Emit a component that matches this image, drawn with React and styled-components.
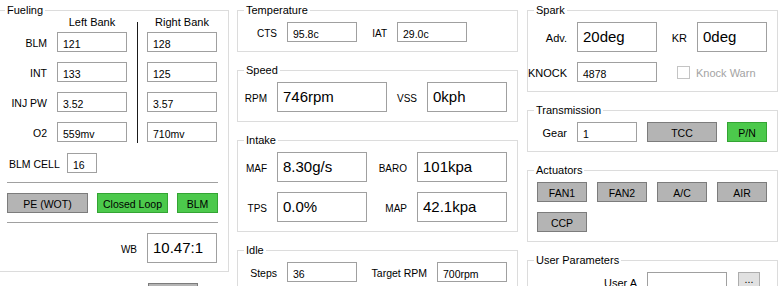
import React from "react";
import styled, { createGlobalStyle } from "styled-components";

const GlobalStyle = createGlobalStyle`
  * { box-sizing: border-box; }
  html, body {
    margin: 0;
    padding: 0;
    background: #ffffff;
    overflow: hidden;
  }
  body {
    font-family: "Liberation Sans", Arial, sans-serif;
    font-size: 11px;
    color: #000;
  }
`;

const Page = styled.div`
  display: flex;
  align-items: flex-start;
  width: 784px;
  height: 286px;
  padding-top: 3px;
  overflow: hidden;
`;

const Column = styled.div`
  display: flex;
  flex-direction: column;
  gap: 11px;
  flex-shrink: 0;
  width: ${(p) => p.$w}px;
  margin-left: ${(p) => p.$ml || 0}px;
`;

const Group = styled.fieldset`
  margin: 0;
  min-width: 0;
  border: 1px solid #dcdcdc;
  padding: ${(p) => p.$pt ?? 5}px 0 ${(p) => p.$pb ?? 9}px 0;
`;

const Legend = styled.legend`
  margin-left: 6px;
  padding: 0 2px;
  height: 14px;
  font-size: 11px;
  line-height: 14px;
`;

const Row = styled.div`
  display: flex;
  align-items: center;
  flex-wrap: ${(p) => (p.$wrap ? "wrap" : "nowrap")};
  gap: ${(p) => p.$gap || 0}px;
  margin-top: ${(p) => p.$mt || 0}px;
  padding-left: ${(p) => p.$pl || 0}px;
  padding-right: ${(p) => p.$pr || 0}px;
  justify-content: ${(p) => (p.$end ? "flex-end" : "flex-start")};
`;

const Stack = styled.div`
  display: flex;
  flex-direction: column;
  gap: 10px;
`;

const Label = styled.span`
  display: block;
  flex-shrink: 0;
  width: ${(p) => (p.$w ? `${p.$w}px` : "auto")};
  margin: 3px ${(p) => p.$mr ?? 10}px 0 0;
  font-size: ${(p) => p.$size || 10.5}px;
  line-height: 13px;
  text-align: ${(p) => (p.$left ? "left" : "right")};
  white-space: nowrap;
`;

const Field = styled.div`
  flex-shrink: 0;
  width: ${(p) => p.$w}px;
  height: ${(p) => (p.$big ? 30 : 20)}px;
  border: 1px solid #a0a0a0;
  background: #fff;
  padding: 5px 0 0 5px;
  font-size: ${(p) => (p.$big ? 15 : 10.5)}px;
  line-height: ${(p) => (p.$big ? 17 : 13)}px;
  color: #000;
  white-space: nowrap;
  overflow: hidden;
`;

const Btn = styled.div`
  flex-shrink: 0;
  display: flex;
  align-items: center;
  justify-content: center;
  width: ${(p) => p.$w}px;
  height: 20px;
  margin-left: ${(p) => p.$ml || 0}px;
  padding-top: 2px;
  font-size: 10.5px;
  border: 1px solid ${(p) => (p.$on ? "#33a433" : p.$light ? "#adadad" : "#7c7c7c")};
  background: ${(p) => (p.$on ? "#4cc94c" : p.$light ? "#e1e1e1" : "#b4b4b4")};
  color: #000;
`;

const DotsBtn = styled(Btn)`
  align-items: flex-start;
  padding-top: 1px;
  line-height: 10px;
`;

/* fueling parts */
const BankArea = styled.div`
  display: flex;
  align-items: flex-start;
`;

const LabelCol = styled.div`
  display: flex;
  flex-direction: column;
  width: 48px;
  margin-right: 10px;
`;

const BankCol = styled.div`
  display: flex;
  flex-direction: column;
  width: 70px;
`;

const BankHead = styled.div`
  height: 15px;
  font-size: 11px;
  line-height: 11px;
  text-align: center;
  white-space: nowrap;
`;

const RowLabel = styled.div`
  height: 20px;
  padding-top: 5px;
  font-size: 10.5px;
  line-height: 13px;
  text-align: right;
  white-space: nowrap;
`;

const VLine = styled.div`
  width: 1px;
  height: 121px;
  margin: 5px 9px 0 10px;
  background: #1a1a1a;
`;

const HLine = styled.div`
  height: 1px;
  margin: 9px 10px 0 8px;
  background: #a0a0a0;
`;

const CheckBox = styled.span`
  display: block;
  width: 13px;
  height: 13px;
  margin: 0 6px 0 20px;
  border: 1px solid #c4c4c4;
  background: #fff;
`;

const Disabled = styled.span`
  margin-top: 2px;
  font-size: 11px;
  color: #a3a3a3;
`;

const fuelRows = [
  { label: "BLM", left: "121", right: "128" },
  { label: "INT", left: "133", right: "125" },
  { label: "INJ PW", left: "3.52", right: "3.57" },
  { label: "O2", left: "559mv", right: "710mv" },
];

const actuators = ["FAN1", "FAN2", "A/C", "AIR", "CCP"];

function Fueling() {
  return (
    <Group $pt={0} $pb={8}>
      <Legend>Fueling</Legend>
      <BankArea>
        <LabelCol>
          <BankHead />
          <Stack>
            {fuelRows.map((r) => (
              <RowLabel key={r.label}>{r.label}</RowLabel>
            ))}
          </Stack>
        </LabelCol>
        <BankCol>
          <BankHead>Left Bank</BankHead>
          <Stack>
            {fuelRows.map((r) => (
              <Field key={r.label} $w={70}>{r.left}</Field>
            ))}
          </Stack>
        </BankCol>
        <VLine />
        <BankCol>
          <BankHead>Right Bank</BankHead>
          <Stack>
            {fuelRows.map((r) => (
              <Field key={r.label} $w={70}>{r.right}</Field>
            ))}
          </Stack>
        </BankCol>
      </BankArea>
      <Row $mt={10} $pl={10}>
        <Label $w={58} $mr={0} $left>BLM CELL</Label>
        <Field $w={30}>16</Field>
      </Row>
      <HLine />
      <Row $mt={10} $pl={8} $gap={9}>
        <Btn $w={81}>PE (WOT)</Btn>
        <Btn $w={71} $on>Closed Loop</Btn>
        <Btn $w={41} $on>BLM</Btn>
      </Row>
      <HLine />
      <Row $mt={10} $pr={11} $end>
        <Label $size={10}>WB</Label>
        <Field $w={70} $big>10.47:1</Field>
      </Row>
    </Group>
  );
}

export default function App() {
  return (
    <>
      <GlobalStyle />
      <Page>
        <Column $w={231} $ml={-2}>
          <Fueling />
          <Row $pl={9}>
            <Label $w={141} $mr={0} $left $size={11}>ECM Trouble Codes</Label>
            <Btn $w={50} />
          </Row>
        </Column>

        <Column $w={281} $ml={8}>
          <Group>
            <Legend>Temperature</Legend>
            <Row>
              <Label $w={39} $size={10}>CTS</Label>
              <Field $w={70}>95.8c</Field>
              <Label $w={30} $size={10}>IAT</Label>
              <Field $w={70}>29.0c</Field>
            </Row>
          </Group>
          <Group>
            <Legend>Speed</Legend>
            <Row>
              <Label $w={29} $size={10}>RPM</Label>
              <Field $w={110} $big>746rpm</Field>
              <Label $w={30} $size={10}>VSS</Label>
              <Field $w={80} $big>0kph</Field>
            </Row>
          </Group>
          <Group>
            <Legend>Intake</Legend>
            <Stack>
              <Row>
                <Label $w={29} $size={10}>MAF</Label>
                <Field $w={90} $big>8.30g/s</Field>
                <Label $w={40} $size={10}>BARO</Label>
                <Field $w={90} $big>101kpa</Field>
              </Row>
              <Row>
                <Label $w={29} $size={10}>TPS</Label>
                <Field $w={90} $big>0.0%</Field>
                <Label $w={40} $size={10}>MAP</Label>
                <Field $w={90} $big>42.1kpa</Field>
              </Row>
            </Stack>
          </Group>
          <Group>
            <Legend>Idle</Legend>
            <Row>
              <Label $w={39}>Steps</Label>
              <Field $w={70}>36</Field>
              <Label $w={70}>Target RPM</Label>
              <Field $w={70}>700rpm</Field>
            </Row>
          </Group>
        </Column>

        <Column $w={251} $ml={9}>
          <Group>
            <Legend>Spark</Legend>
            <Stack>
              <Row>
                <Label $w={39} $size={11}>Adv.</Label>
                <Field $w={80} $big>20deg</Field>
                <Label $w={30} $size={11}>KR</Label>
                <Field $w={70} $big>0deg</Field>
              </Row>
              <Row>
                <Label $w={39} $size={11}>KNOCK</Label>
                <Field $w={80}>4878</Field>
                <CheckBox />
                <Disabled>Knock Warn</Disabled>
              </Row>
            </Stack>
          </Group>
          <Group>
            <Legend>Transmission</Legend>
            <Row>
              <Label $w={39} $size={11}>Gear</Label>
              <Field $w={60}>1</Field>
              <Btn $w={70} $ml={10}>TCC</Btn>
              <Btn $w={40} $ml={10} $on>P/N</Btn>
            </Row>
          </Group>
          <Group>
            <Legend>Actuators</Legend>
            <Row $wrap $gap={10} $pl={9}>
              {actuators.map((a) => (
                <Btn key={a} $w={50}>{a}</Btn>
              ))}
            </Row>
          </Group>
          <Group>
            <Legend>User Parameters</Legend>
            <Row>
              <Label $w={109} $size={11}>User A</Label>
              <Field $w={80} />
              <DotsBtn $w={22} $ml={11} $light>...</DotsBtn>
            </Row>
          </Group>
        </Column>
      </Page>
    </>
  );
}
